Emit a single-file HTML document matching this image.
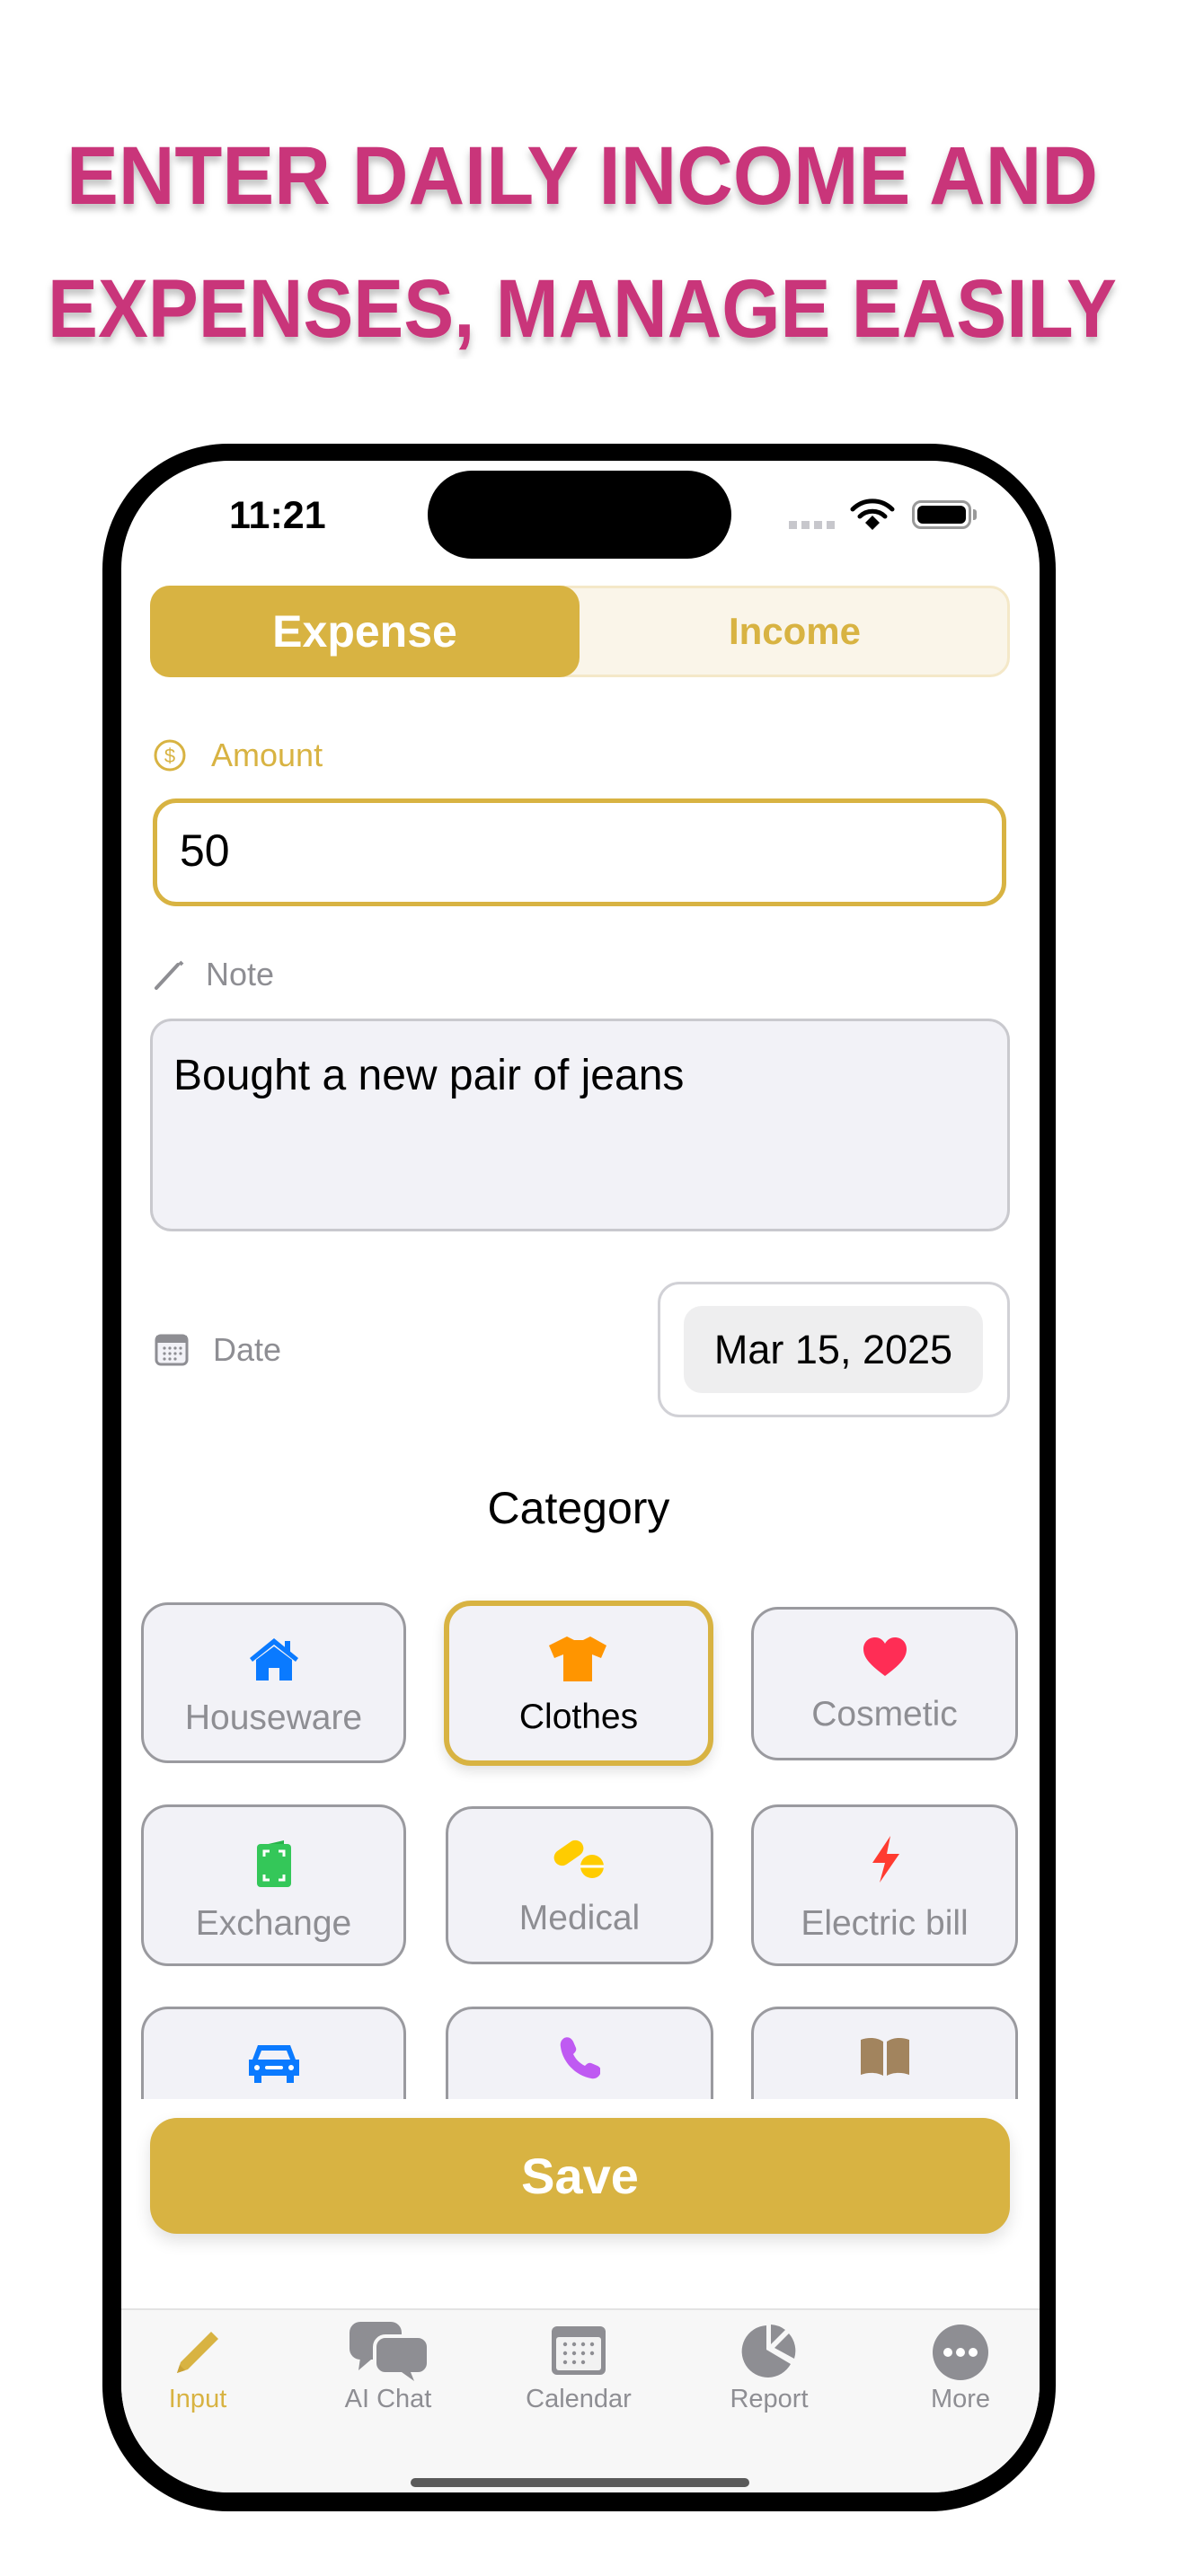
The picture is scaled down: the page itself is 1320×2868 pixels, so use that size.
<!DOCTYPE html>
<html><head><meta charset="utf-8">
<style>
*{margin:0;padding:0;box-sizing:border-box}
html,body{width:1320px;height:2868px;background:#fff;overflow:hidden;font-family:"Liberation Sans",sans-serif}
.a{position:absolute}
.phone{left:114px;top:494px;width:1061px;height:2302px;background:#000;border-radius:140px}
.screen{left:135px;top:513px;width:1022px;height:2262px;background:#fff;border-radius:120px;overflow:hidden}
.lbl{font-size:36px;display:flex;align-items:center}
.cell{position:absolute;background:#f2f2f7;border:3px solid #9a9a9f;border-radius:30px;}
.cell .t{position:absolute;left:0;right:0;text-align:center;font-size:39px;color:#8e8e93}
.cell svg{position:absolute;left:50%;transform:translateX(-50%)}
.tab{position:absolute;top:2655px;width:200px;margin-left:-100px;text-align:center;font-size:29px;color:#8e8e93}
</style></head><body>

<svg class="a" style="left:0;top:130px" width="1320" height="270">
<defs><filter id="sh" x="-5%" y="-20%" width="110%" height="140%"><feDropShadow dx="0" dy="6" stdDeviation="4" flood-color="#000" flood-opacity="0.25"/></filter></defs>
<g filter="url(#sh)" fill="#c9367a" font-family="Liberation Sans, sans-serif" font-weight="bold" font-size="92">
<text x="74" y="97" textLength="1148" lengthAdjust="spacingAndGlyphs">ENTER DAILY INCOME AND</text>
<text x="53" y="245" textLength="1190" lengthAdjust="spacingAndGlyphs">EXPENSES, MANAGE EASILY</text>
</g></svg>

<div class="a phone"></div>
<div class="a screen"></div>

<div class="a" style="left:255px;top:550px;font-size:43px;font-weight:bold;color:#000">11:21</div>
<div class="a" style="left:476px;top:524px;width:338px;height:98px;background:#000;border-radius:49px"></div>
<div class="a" style="left:878px;top:580px;width:51px;height:9px;background:repeating-linear-gradient(90deg,#c7c7cc 0 9px,transparent 9px 14px)"></div>
<svg class="a" style="left:946px;top:555px" width="50" height="36" viewBox="0 0 50 36"><path d="M3 12a31 31 0 0 1 44 0" stroke="#000" stroke-width="5" fill="none" stroke-linecap="round"/><path d="M11 20a20 20 0 0 1 28 0" stroke="#000" stroke-width="5" fill="none" stroke-linecap="round"/><path d="M17 27l8-8 8 8-8 8z" fill="#000"/></svg>
<div class="a" style="left:1015px;top:557px;width:66px;height:32px;border:3px solid #999;border-radius:10px;padding:3px"><div style="width:100%;height:100%;background:#000;border-radius:6px"></div></div>
<div class="a" style="left:1083px;top:567px;width:4px;height:12px;background:#999;border-radius:0 3px 3px 0"></div>

<div class="a" style="left:167px;top:652px;width:957px;height:102px;background:#faf5e9;border:3px solid #f4e8c8;border-radius:22px"></div>
<div class="a" style="left:167px;top:652px;width:478px;height:102px;background:#d8b342;border-radius:22px;color:#fff;font-size:50px;font-weight:bold;display:flex;align-items:center;justify-content:center">Expense</div>
<div class="a" style="left:645px;top:652px;width:479px;height:102px;color:#d8b342;font-size:42px;font-weight:bold;display:flex;align-items:center;justify-content:center">Income</div>

<svg class="a" style="left:170px;top:822px" width="38" height="38" viewBox="0 0 38 38"><circle cx="19" cy="19" r="16" stroke="#d8b342" stroke-width="3" fill="none"/><text x="19" y="27" text-anchor="middle" font-size="22" fill="#d8b342" font-family="Liberation Sans">$</text></svg>
<div class="a lbl" style="left:235px;top:820px;height:42px;color:#d8b342">Amount</div>
<div class="a" style="left:170px;top:889px;width:950px;height:120px;border:5px solid #d8b342;border-radius:26px"></div>
<div class="a" style="left:200px;top:918px;font-size:50px;color:#000">50</div>

<svg class="a" style="left:170px;top:1068px" width="36" height="36" viewBox="0 0 36 36"><path d="M4 32L28 6" stroke="#8e8e93" stroke-width="4" stroke-linecap="round"/><path d="M30 3l3 3" stroke="#8e8e93" stroke-width="4"/></svg>
<div class="a lbl" style="left:229px;top:1064px;height:42px;color:#8e8e93">Note</div>
<div class="a" style="left:167px;top:1134px;width:957px;height:237px;background:#f2f2f7;border:3px solid #c9c9ce;border-radius:24px"></div>
<div class="a" style="left:193px;top:1170px;font-size:48px;color:#000">Bought a new pair of jeans</div>

<svg class="a" style="left:172px;top:1485px" width="38" height="36" viewBox="0 0 38 36"><rect x="2" y="2" width="34" height="32" rx="5" fill="#f2f2f7" stroke="#8e8e93" stroke-width="3"/><rect x="2" y="2" width="34" height="8" fill="#8e8e93"/><g fill="#8e8e93"><circle cx="11" cy="16" r="1.6"/><circle cx="17" cy="16" r="1.6"/><circle cx="23" cy="16" r="1.6"/><circle cx="29" cy="16" r="1.6"/><circle cx="11" cy="22" r="1.6"/><circle cx="17" cy="22" r="1.6"/><circle cx="23" cy="22" r="1.6"/><circle cx="29" cy="22" r="1.6"/><circle cx="11" cy="28" r="1.6"/><circle cx="17" cy="28" r="1.6"/><circle cx="23" cy="28" r="1.6"/></g></svg>
<div class="a lbl" style="left:237px;top:1482px;height:42px;color:#8e8e93">Date</div>
<div class="a" style="left:732px;top:1427px;width:392px;height:151px;border:3px solid #d1d1d6;border-radius:24px"></div>
<div class="a" style="left:761px;top:1454px;width:333px;height:97px;background:#eeeeef;border-radius:20px;font-size:45px;color:#000;display:flex;align-items:center;justify-content:center">Mar 15, 2025</div>

<div class="a" style="left:444px;top:1650px;width:400px;text-align:center;font-size:50px;color:#000">Category</div>

<!-- row1 -->
<div class="cell" style="left:157px;top:1784px;width:295px;height:179px">
<svg style="top:34px" width="60" height="52" viewBox="0 0 60 52"><path d="M30 3L3 25l3 4 24-19 24 19 3-4z" fill="#0a7aff"/><path d="M42 6h6v12l-6-5z" fill="#0a7aff"/><path d="M10 27l20-15 20 15v23H36V36h-12v14H10z" fill="#0a7aff"/></svg>
<div class="t" style="top:104px">Houseware</div></div>
<div class="cell" style="left:494px;top:1782px;width:300px;height:184px;border:6px solid #d8b342;box-shadow:0 6px 14px rgba(0,0,0,0.12)">
<svg style="top:32px" width="66" height="54" viewBox="0 0 66 54"><path d="M20 2l8 4h10l8-4 18 10-6 14-10-4v30H16V22L6 26 0 12z" fill="#ff9500"/></svg>
<div class="t" style="top:102px;color:#000">Clothes</div></div>
<div class="cell" style="left:836px;top:1789px;width:297px;height:171px">
<svg style="top:30px" width="52" height="46" viewBox="0 0 52 46"><path d="M26 44C10 32 2 24 2 14 2 6 8 1 15 1c5 0 9 3 11 7 2-4 6-7 11-7 7 0 13 5 13 13 0 10-8 18-24 30z" fill="#ff2d55"/></svg>
<div class="t" style="top:95px">Cosmetic</div></div>
<!-- row2 -->
<div class="cell" style="left:157px;top:2009px;width:295px;height:180px">
<svg style="top:35px" width="42" height="56" viewBox="0 0 42 56"><path d="M6 8L32 2v6z" fill="#28b34a"/><rect x="2" y="6" width="38" height="48" rx="4" fill="#34c759"/><path d="M10 20v-6h6M26 14h6v6M32 40v6h-6M16 46h-6v-6" stroke="#fff" stroke-width="3" fill="none"/></svg>
<div class="t" style="top:108px">Exchange</div></div>
<div class="cell" style="left:496px;top:2011px;width:298px;height:176px">
<svg style="top:30px" width="60" height="50" viewBox="0 0 60 50"><rect x="0" y="10" width="36" height="18" rx="9" transform="rotate(-35 18 19)" fill="#ffcc00"/><circle cx="44" cy="34" r="13" fill="#ffcc00"/><path d="M31 34h26" stroke="#fff" stroke-width="3"/></svg>
<div class="t" style="top:100px">Medical</div></div>
<div class="cell" style="left:836px;top:2009px;width:297px;height:180px">
<svg style="top:30px" width="36" height="56" viewBox="0 0 36 56"><path d="M24 2L4 32h14l-6 22 22-32H20z" fill="#ff3b30"/></svg>
<div class="t" style="top:108px">Electric bill</div></div>
<!-- row3 -->
<div class="cell" style="left:157px;top:2234px;width:295px;height:180px">
<svg style="top:36px" width="60" height="46" viewBox="0 0 60 46"><path d="M12 4h36l6 16h4v18h-6v8h-8v-8H16v8H8v-8H2V20h4z" fill="#0a7aff"/><path d="M16 10h28l4 10H12z" fill="#f2f2f7"/><circle cx="11" cy="29" r="3" fill="#fff"/><circle cx="49" cy="29" r="3" fill="#fff"/><rect x="20" y="27" width="20" height="4" rx="2" fill="#fff"/></svg></div>
<div class="cell" style="left:496px;top:2234px;width:298px;height:180px">
<svg style="top:30px" width="46" height="48" viewBox="0 0 46 48"><path d="M6 2c4-2 8 0 10 4l3 7c1 3-1 5-3 7 3 6 7 10 13 13 2-2 4-4 7-3l7 3c4 2 5 6 3 9-2 4-6 6-10 5C18 44 4 28 2 12 1 7 3 4 6 2z" fill="#bf5af2"/></svg></div>
<div class="cell" style="left:836px;top:2234px;width:297px;height:180px">
<svg style="top:30px" width="58" height="46" viewBox="0 0 58 46"><path d="M2 4c8-3 18-3 25 2v38c-7-4-17-4-25-1z" fill="#a2845e"/><path d="M56 4c-8-3-18-3-25 2v38c7-4 17-4 25-1z" fill="#a2845e"/></svg></div>

<div class="a" style="left:135px;top:2337px;width:1022px;height:230px;background:#fff"></div>
<div class="a" style="left:167px;top:2358px;width:957px;height:129px;background:#d8b342;border-radius:30px;box-shadow:0 8px 18px rgba(0,0,0,0.12);color:#fff;font-size:56px;font-weight:bold;display:flex;align-items:center;justify-content:center">Save</div>

<!-- tab bar -->
<div class="a" style="left:135px;top:2570px;width:1022px;height:205px;background:#f7f7f7;border-top:2px solid #e3e3e3;border-radius:0 0 120px 120px"></div>
<svg class="a" style="left:193px;top:2592px" width="54" height="54" viewBox="0 0 54 54"><path d="M4 50l4-12L42 4l8 8-34 34z" fill="#d8b342"/><path d="M4 50l3-9 6 6z" fill="#c9a236"/></svg>
<svg class="a" style="left:387px;top:2583px" width="92" height="68" viewBox="0 0 92 68"><rect x="2" y="2" width="58" height="42" rx="12" fill="#8e8e93"/><path d="M14 42l-2 14 14-12z" fill="#8e8e93"/><rect x="30" y="18" width="60" height="42" rx="12" fill="#8e8e93" stroke="#f7f7f7" stroke-width="4"/><path d="M70 58l4 10-14-10z" fill="#8e8e93"/></svg>
<svg class="a" style="left:612px;top:2588px" width="64" height="58" viewBox="0 0 64 58"><rect x="2" y="2" width="60" height="54" rx="6" fill="#8e8e93"/><rect x="7" y="14" width="50" height="37" rx="3" fill="#f2f2f2"/><g fill="#8e8e93"><circle cx="17" cy="22" r="2.2"/><circle cx="27" cy="22" r="2.2"/><circle cx="37" cy="22" r="2.2"/><circle cx="47" cy="22" r="2.2"/><circle cx="17" cy="32" r="2.2"/><circle cx="27" cy="32" r="2.2"/><circle cx="37" cy="32" r="2.2"/><circle cx="47" cy="32" r="2.2"/><circle cx="17" cy="42" r="2.2"/><circle cx="27" cy="42" r="2.2"/><circle cx="37" cy="42" r="2.2"/></g></svg>
<svg class="a" style="left:824px;top:2586px" width="64" height="64" viewBox="0 0 64 64"><path d="M29 3A29 29 0 1 0 56 46L29 30z" fill="#8e8e93"/><path d="M34 2a29 29 0 0 1 16 6L34 24z" fill="#8e8e93"/><path d="M54 12a29 29 0 0 1 6 28L38 28z" fill="#8e8e93"/></svg>
<svg class="a" style="left:1037px;top:2587px" width="64" height="64" viewBox="0 0 64 64"><circle cx="32" cy="32" r="31" fill="#8e8e93"/><circle cx="18" cy="32" r="5" fill="#fff"/><circle cx="32" cy="32" r="5" fill="#fff"/><circle cx="46" cy="32" r="5" fill="#fff"/></svg>
<div class="tab" style="left:220px;color:#d8b342">Input</div>
<div class="tab" style="left:432px">AI Chat</div>
<div class="tab" style="left:644px">Calendar</div>
<div class="tab" style="left:856px">Report</div>
<div class="tab" style="left:1069px">More</div>
<div class="a" style="left:457px;top:2759px;width:377px;height:10px;background:#5a5a5a;border-radius:5px"></div>
</body></html>
